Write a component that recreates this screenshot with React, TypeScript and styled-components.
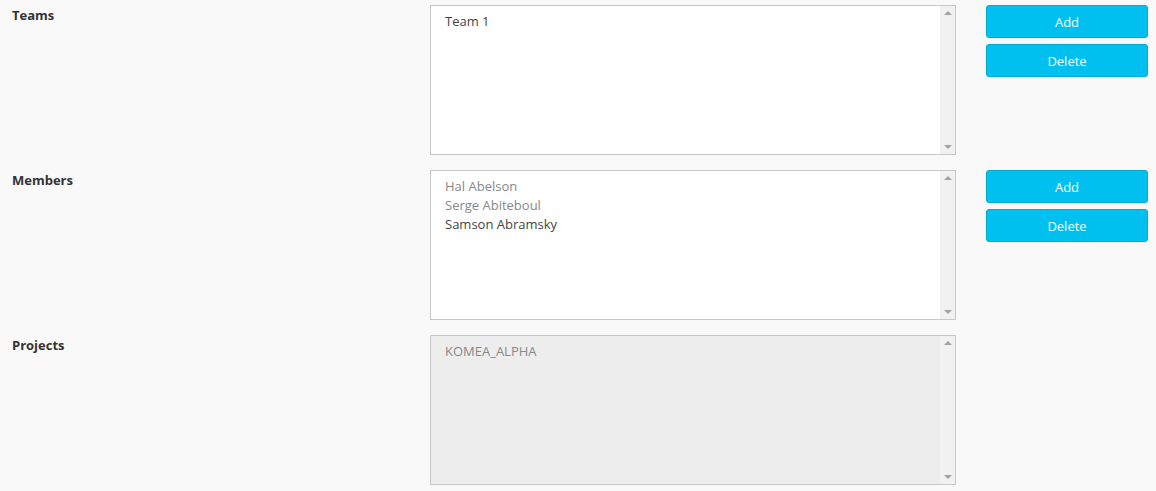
import React from "react";
import styled, { createGlobalStyle } from "styled-components";

const Global = createGlobalStyle`
  html, body { margin: 0; padding: 0; background: #f9f9f9; }
  body { font-family: "Source Sans Pro", "Open Sans", "Noto Sans", sans-serif; font-size: 13px; color: #333; }
`;

const Page = styled.div`
  display: flex;
  flex-direction: column;
  gap: 15px;
  padding: 5px 8px 6px 12px;
  background: #f9f9f9;
  height: 491px;
  box-sizing: border-box;
`;

const Row = styled.div`
  display: grid;
  grid-template-columns: 418px 526px 162px;
  align-items: start;
`;

const Label = styled.div`
  font-weight: 700;
  font-size: 13px;
  color: #333;
  padding-top: 1px;
`;

const ListBox = styled.div<{ $disabled?: boolean }>`
  height: 150px;
  box-sizing: border-box;
  border: 1px solid #c8c8c8;
  background: ${(p) => (p.$disabled ? "#ededed" : "#fff")};
  display: flex;
  width: 526px;
`;

const Items = styled.div`
  flex: 1;
  padding: 6px 14px;
  display: flex;
  flex-direction: column;
`;

const Item = styled.div<{ $muted?: boolean }>`
  line-height: 19px;
  font-size: 13px;
  color: ${(p) => (p.$muted ? "#888" : "#444")};
`;

const Scrollbar = styled.div`
  width: 15px;
  background: #f1f1f1;
  display: flex;
  flex-direction: column;
  justify-content: space-between;
  align-items: center;
  padding: 5px 0;
`;

const Arrow = styled.div<{ $down?: boolean }>`
  width: 0;
  height: 0;
  border-left: 4px solid transparent;
  border-right: 4px solid transparent;
  ${(p) =>
    p.$down
      ? "border-top: 4px solid #a3a3a3;"
      : "border-bottom: 4px solid #a3a3a3;"}
`;

const Buttons = styled.div`
  display: flex;
  flex-direction: column;
  gap: 6px;
  margin-left: 30px;
`;

const Button = styled.button`
  width: 162px;
  height: 33px;
  box-sizing: border-box;
  background: #00c0ef;
  border: 1px solid #00acd6;
  border-radius: 3px;
  color: #fff;
  font-family: inherit;
  font-size: 13px;
  padding: 0;
  cursor: pointer;
`;

type Opt = { label: string; muted?: boolean };

function List({ items, disabled }: { items: Opt[]; disabled?: boolean }) {
  return (
    <ListBox $disabled={disabled}>
      <Items>
        {items.map((i) => (
          <Item key={i.label} $muted={i.muted}>
            {i.label}
          </Item>
        ))}
      </Items>
      <Scrollbar>
        <Arrow />
        <Arrow $down />
      </Scrollbar>
    </ListBox>
  );
}

export default function App() {
  return (
    <>
      <Global />
      <Page>
        <Row>
          <Label>Teams</Label>
          <List items={[{ label: "Team 1" }]} />
          <Buttons>
            <Button>Add</Button>
            <Button>Delete</Button>
          </Buttons>
        </Row>
        <Row>
          <Label>Members</Label>
          <List
            items={[
              { label: "Hal Abelson", muted: true },
              { label: "Serge Abiteboul", muted: true },
              { label: "Samson Abramsky" },
            ]}
          />
          <Buttons>
            <Button>Add</Button>
            <Button>Delete</Button>
          </Buttons>
        </Row>
        <Row>
          <Label>Projects</Label>
          <List disabled items={[{ label: "KOMEA_ALPHA", muted: true }]} />
          <div />
        </Row>
      </Page>
    </>
  );
}
